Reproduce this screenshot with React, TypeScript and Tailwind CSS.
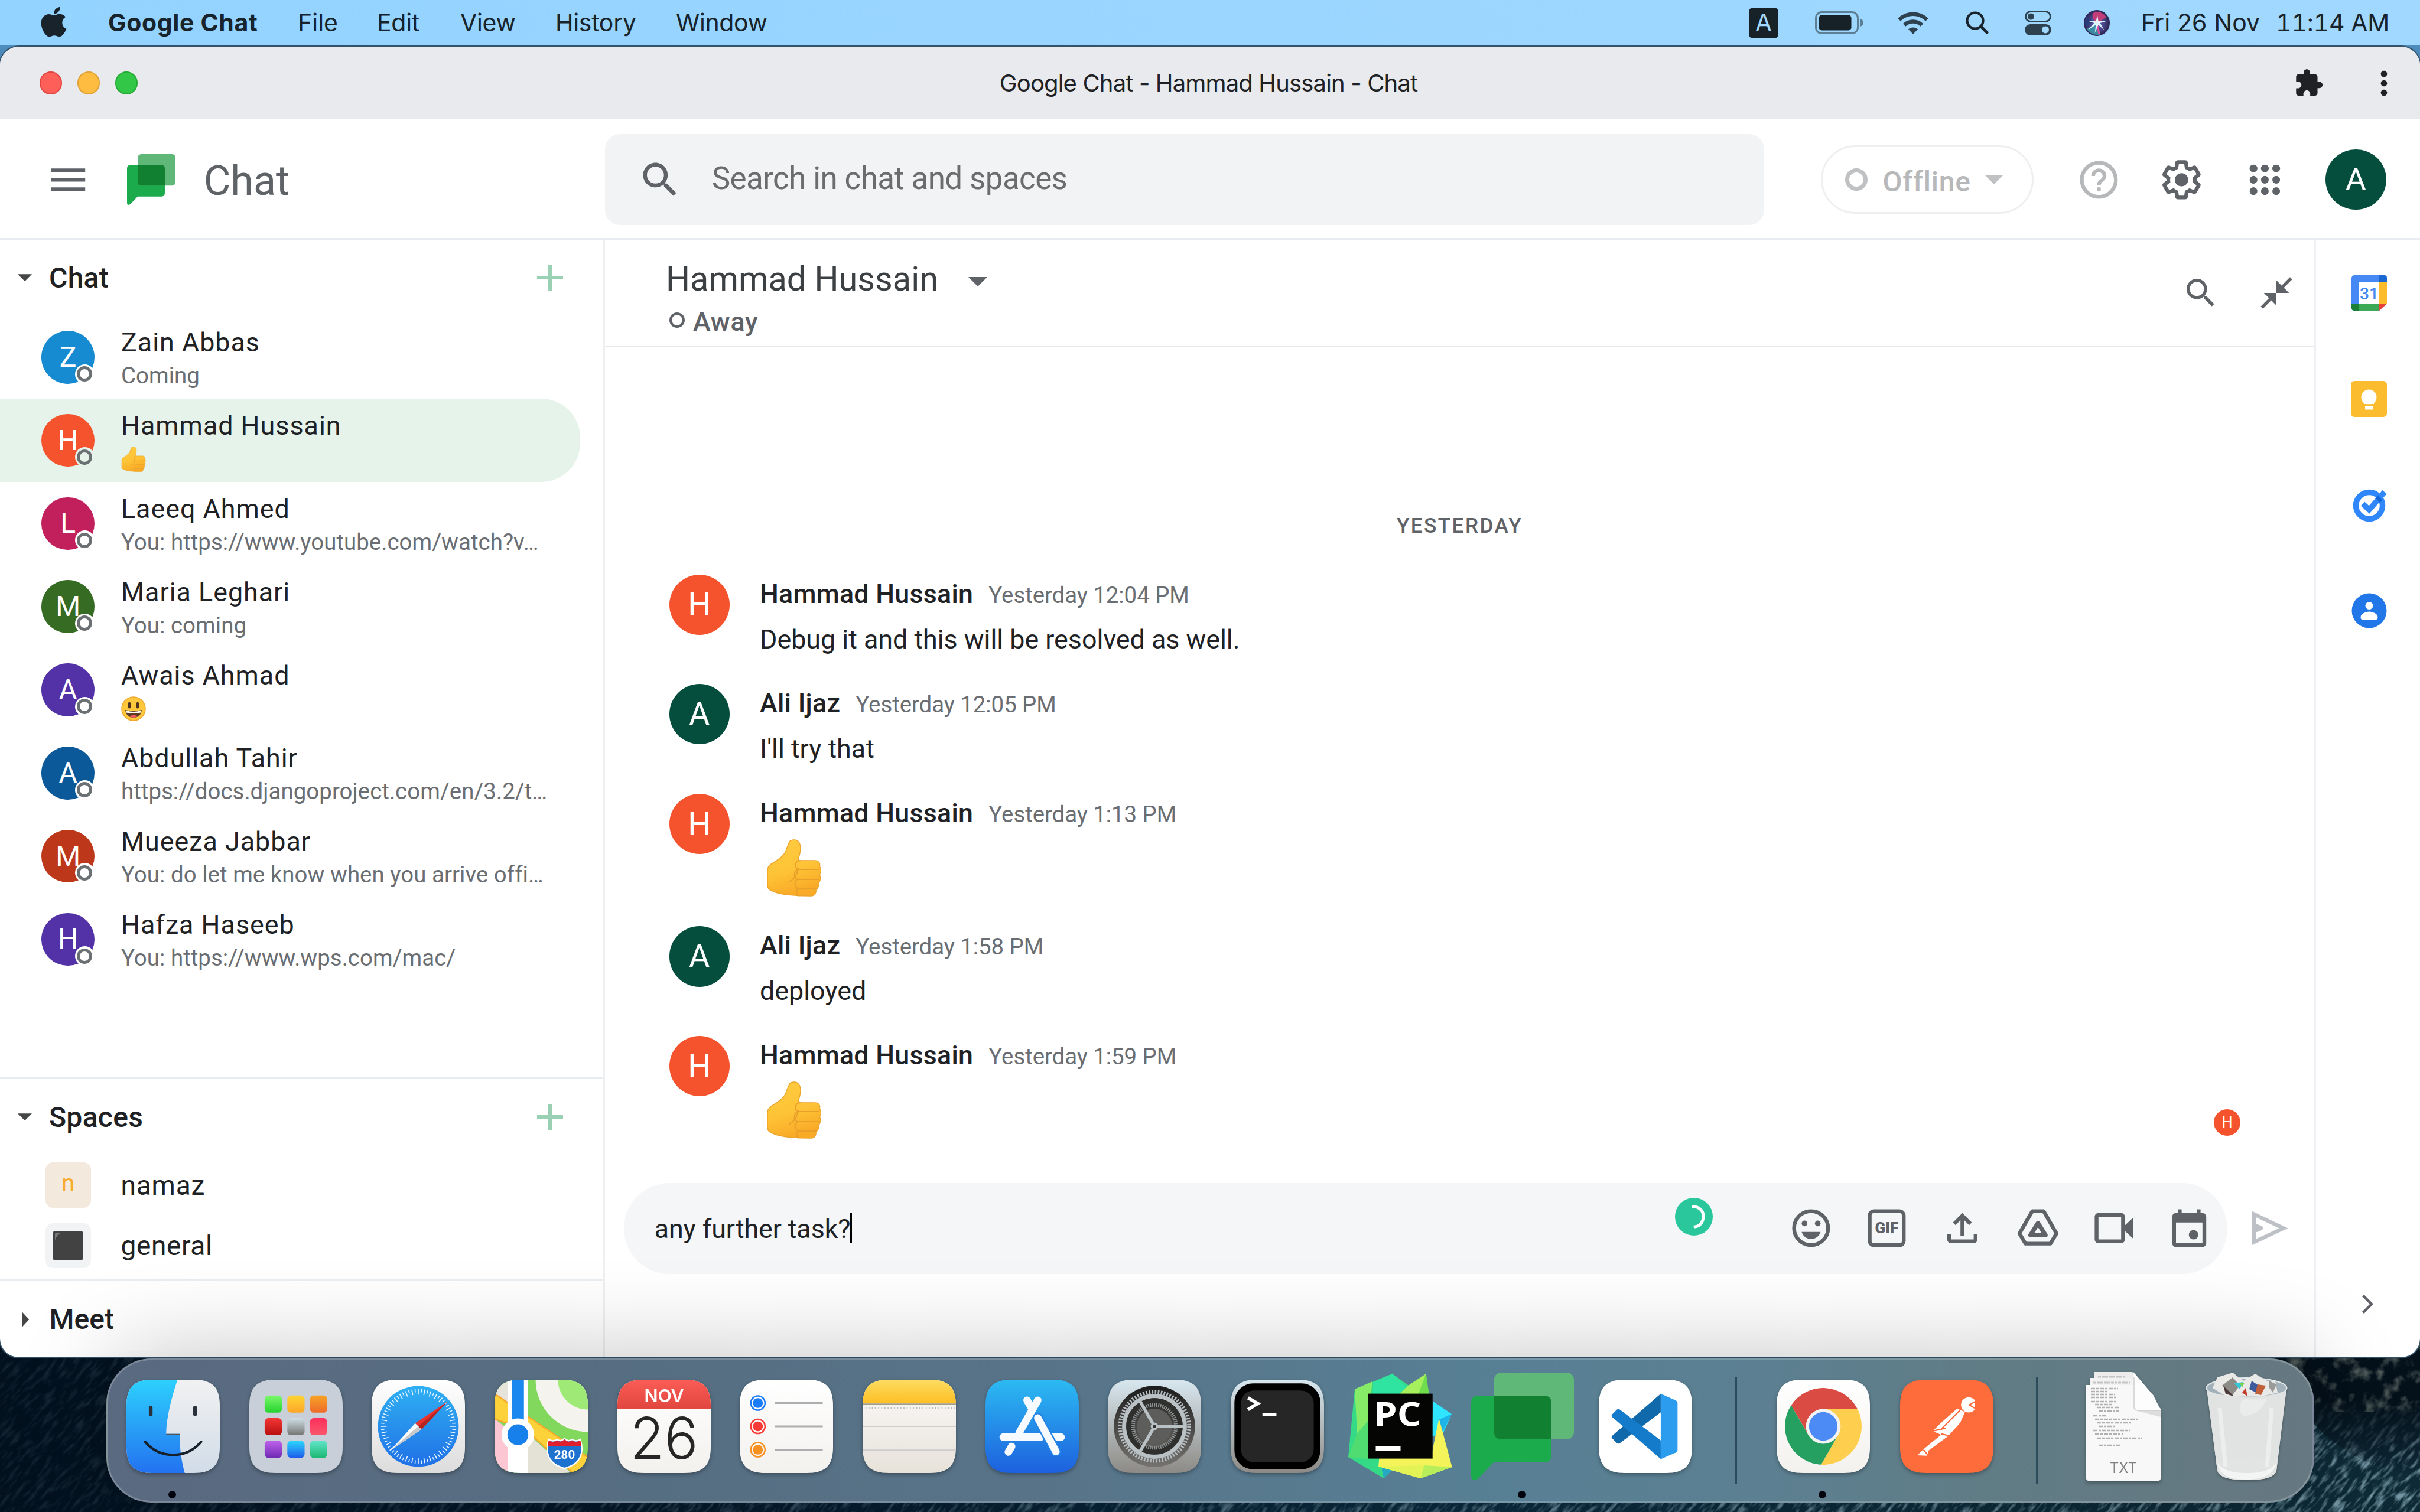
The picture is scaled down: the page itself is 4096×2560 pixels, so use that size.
import React from "react";
import { FaApple } from "react-icons/fa";

/* ---------- shared icon helpers ---------- */

type GlyphProps = { d: string; className?: string; rule?: "evenodd" | "nonzero" };

const Glyph = ({ d, className = "size-[76.8px] text-[#5f6368]", rule = "nonzero" }: GlyphProps) => (
  <svg viewBox="0 0 24 24" className={`shrink-0 fill-current ${className}`}>
    <path d={d} fillRule={rule} />
  </svg>
);

const SEARCH =
  "M15.5 14h-.79l-.28-.27C15.41 12.59 16 11.11 16 9.5 16 5.91 13.09 3 9.5 3S3 5.91 3 9.5 5.91 16 9.5 16c1.61 0 3.09-.59 4.23-1.57l.27.28v.79l5 4.99L20.49 19l-4.99-5zm-6 0C7.01 14 5 11.99 5 9.5S7.01 5 9.5 5 14 7.01 14 9.5 11.99 14 9.5 14z";
const MENU = "M3 18h18v-2H3v2zm0-5h18v-2H3v2zm0-7v2h18V6H3z";
const EXTENSION =
  "M20.5 11H19V7c0-1.1-.9-2-2-2h-4V3.5C13 2.12 11.88 1 10.5 1S8 2.12 8 3.5V5H4c-1.1 0-1.99.9-1.99 2v3.8H3.5c1.49 0 2.7 1.21 2.7 2.7s-1.21 2.7-2.7 2.7H2V20c0 1.1.9 2 2 2h3.8v-1.5c0-1.49 1.21-2.7 2.7-2.7 1.49 0 2.7 1.21 2.7 2.7V22H17c1.1 0 2-.9 2-2v-4h1.5c1.38 0 2.5-1.12 2.5-2.5S21.88 11 20.5 11z";
const MORE =
  "M12 8c1.1 0 2-.9 2-2s-.9-2-2-2-2 .9-2 2 .9 2 2 2zm0 2c-1.1 0-2 .9-2 2s.9 2 2 2 2-.9 2-2-.9-2-2-2zm0 6c-1.1 0-2 .9-2 2s.9 2 2 2 2-.9 2-2-.9-2-2-2z";
const HELP =
  "M11 18h2v-2h-2v2zm1-16C6.48 2 2 6.48 2 12s4.48 10 10 10 10-4.48 10-10S17.52 2 12 2zm0 18c-4.41 0-8-3.59-8-8s3.59-8 8-8 8 3.59 8 8-3.59 8-8 8zm0-14c-2.21 0-4 1.79-4 4h2c0-1.1.9-2 2-2s2 .9 2 2c0 2-3 1.75-3 5h2c0-2.25 3-2.5 3-5 0-2.21-1.79-4-4-4z";
const GEAR =
  "M19.43 12.98c.04-.32.07-.64.07-.98 0-.34-.03-.66-.07-.98l2.11-1.65c.19-.15.24-.42.12-.64l-2-3.46c-.09-.16-.26-.25-.44-.25-.06 0-.12.01-.17.03l-2.49 1c-.52-.4-1.08-.73-1.69-.98l-.38-2.65C14.46 2.18 14.25 2 14 2h-4c-.25 0-.46.18-.49.42l-.38 2.65c-.61.25-1.17.59-1.69.98l-2.49-1c-.06-.02-.12-.03-.18-.03-.17 0-.34.09-.43.25l-2 3.46c-.13.22-.07.49.12.64l2.11 1.65c-.04.32-.07.65-.07.98 0 .33.03.66.07.98l-2.11 1.65c-.19.15-.24.42-.12.64l2 3.46c.09.16.26.25.44.25.06 0 .12-.01.17-.03l2.49-1c.52.4 1.08.73 1.69.98l.38 2.65c.03.24.24.42.49.42h4c.25 0 .46-.18.49-.42l.38-2.65c.61-.25 1.17-.59 1.69-.98l2.49 1c.06.02.12.03.18.03.17 0 .34-.09.43-.25l2-3.46c.12-.22.07-.49-.12-.64l-2.11-1.65z";
const COLLAPSE =
  "M22 3.41L16.71 8.7 20 12h-8V4l3.29 3.29L20.59 2 22 3.41zM3.41 22l5.29-5.29L12 20v-8H4l3.29 3.29L2 20.59 3.41 22z";
const UPLOAD =
  "M4 15h2v3h12v-3h2v3c0 1.1-.9 2-2 2H6c-1.1 0-2-.9-2-2v-3zM13 16V7.83l2.59 2.58L17 9l-5-5-5 5 1.41 1.41L11 7.83V16h2z";
const VIDEO =
  "M18 10.48V6c0-1.1-.9-2-2-2H4c-1.1 0-2 .9-2 2v12c0 1.1.9 2 2 2h12c1.1 0 2-.9 2-2v-4.48l4.3 3.98v-11L18 10.48zM16 18H4V6h12v12z";
const EVENT =
  "M19 4h-1V2h-2v2H8V2H6v2H5c-1.11 0-1.99.9-1.99 2L3 20c0 1.1.89 2 2 2h14c1.1 0 2-.9 2-2V6c0-1.1-.9-2-2-2zm0 16H5V9h14v11zM14.3 13a2.5 2.5 0 1 0 .01 0z";
const SEND = "M3 3l19 9-19 9V3zM5 6.2v3.6c1.2.3 3.9 1.1 3.9 2.2S6.2 13.9 5 14.2v3.6L17.3 12 5 6.2z";

/* ---------- menu bar ---------- */

const Menu = ({ children, className }: { children: React.ReactNode; className: string }) => (
  <span className={`shrink-0 whitespace-pre ${className}`}>{children}</span>
);

const MenuBar = () => (
  <div className="flex h-[77px] shrink-0 items-center bg-linear-to-r from-[#93d3ff] to-[#a1d8ff] font-['Inter',sans-serif] text-[41px] text-[#18232b]">
    <div className="flex w-[183px] shrink-0 pl-[69px]">
      <FaApple className="mb-[4px] h-[58px] w-[44px]" />
    </div>
    <Menu className="w-[321px] font-bold tracking-[0.6px]">Google Chat</Menu>
    <Menu className="w-[134px]">File</Menu>
    <Menu className="w-[141px] tracking-[-0.3px]">Edit</Menu>
    <Menu className="w-[161px] tracking-[-0.3px]">View</Menu>
    <Menu className="w-[204px] tracking-[-0.3px]">History</Menu>
    <Menu className="w-[160px] tracking-[-0.4px]">Window</Menu>
    <div className="ml-auto flex items-center pr-[60px]">
      <div className="flex h-[52px] w-[50px] items-center justify-center rounded-[7px] bg-[#162128] text-[41px] text-[#a0d8ff]">A</div>
      <svg viewBox="0 0 83 39" className="ml-[62px] h-[39px] w-[83px]">
        <rect x="1.5" y="1.5" width="71" height="36" rx="10" fill="none" stroke="#5d7f96" strokeWidth="3" />
        <rect x="6.5" y="6.5" width="55" height="26" rx="5" fill="#162128" />
        <path d="M77 13q5 2 5 6.5t-5 6.5z" fill="#5d7f96" />
      </svg>
      <svg viewBox="0 0 52 38" className="ml-[57px] h-[38px] w-[52px]" fill="none" stroke="#2d414f" strokeWidth="6.5">
        <path d="M2.5 13.5C15.5 0.5 36.5 0.5 49.5 13.5" />
        <path d="M11 22.5C19.500 14.5 32.500 14.5 41 22.5" />
        <path d="M26 38l-8-8.5c4.500-4 11.500-4 16 0z" fill="#2d414f" stroke="none" />
      </svg>
      <svg viewBox="0 0 39 39" className="ml-[63px] size-[39px]" fill="none" stroke="#18232b" strokeWidth="4.2" strokeLinecap="round">
        <circle cx="16" cy="16" r="13.5" />
        <path d="M26 26l10 10" strokeWidth="5" />
      </svg>
      <svg viewBox="0 0 45 42" className="ml-[61px] h-[42px] w-[45px]">
        <rect x="1.5" y="1.5" width="42" height="17" rx="8.5" fill="none" stroke="#2d414f" strokeWidth="3" />
        <circle cx="10.5" cy="10" r="5.5" fill="#2d414f" />
        <rect x="0" y="23" width="45" height="19" rx="9.5" fill="#2d414f" />
        <circle cx="35" cy="32.5" r="6" fill="#a0d8ff" />
      </svg>
      <svg viewBox="0 0 44 44" className="ml-[55px] size-[44px]">
        <defs>
          <radialGradient id="siri">
            <stop offset="0" stopColor="#6b6fd0" />
            <stop offset="1" stopColor="#2b2350" />
          </radialGradient>
        </defs>
        <circle cx="22" cy="22" r="22" fill="url(#siri)" />
        <path d="M22 22C14 14 12 9 18 3a20 20 0 0 1 20 9z" fill="#c23c78" />
        <path d="M22 22C14 20 8 22 4 30a20 20 0 0 1 0-18z" fill="#2a3d7a" />
        <path d="M22 22C26 30 28 36 27 42 15 43 8 38 5 32z" fill="#3c9fb0" opacity=".8" />
        <path d="M22 22l4 19" stroke="#e04a98" strokeWidth="3" />
        <path d="M23 9l1.500 9 13 1-10 3 7 12-10-9-6 14 2-14-14 9 11-12-9-3 12 0z" fill="#e9fbff" opacity=".95" />
      </svg>
      <span className="ml-[53px] w-[228px] tracking-[0.1px] whitespace-nowrap">Fri 26 Nov</span>
      <span className="w-[184px] tracking-[-0.2px] whitespace-nowrap tabular-nums">11:14 AM</span>
    </div>
  </div>
);

/* ---------- window title bar ---------- */

const TitleBar = () => (
  <div className="relative flex h-[123px] shrink-0 items-center justify-center bg-[#e8eaed]">
    <div className="absolute left-[67px] flex gap-[25.6px]">
      <i className="size-[38.4px] rounded-full border-2 border-[#e2443f] bg-[#fe5f58]" />
      <i className="size-[38.4px] rounded-full border-2 border-[#e0a135] bg-[#febc40]" />
      <i className="size-[38.4px] rounded-full border-2 border-[#25aa36] bg-[#33c748]" />
    </div>
    <span className="-ml-[5px] font-['Inter',sans-serif] text-[40px] tracking-[-0.85px] text-[#202124]">
      Google Chat - Hammad Hussain - Chat
    </span>
    <div className="absolute right-[29px] flex items-center">
      <Glyph d={EXTENSION} className="mr-[70px] size-[51.2px] text-[#202124]" />
      <Glyph d={MORE} className="size-[64px] text-[#202124]" />
    </div>
  </div>
);

/* ---------- app header ---------- */

const ChatLogo = ({ className }: { className: string }) => (
  <svg viewBox="0 0 173 181" className={`shrink-0 ${className}`}>
    <path d="M12 39h111q12 0 12 12v88q0 12-12 12H38L11 179Q0 185 0 172V51q0-12 12-12z" fill="#1bab4d" />
    <rect x="38.6" y="0" width="134.4" height="112" rx="12" fill="#60b878" />
    <path d="M38.600 39H123q12 0 12 12v61H51q-12.400 0-12.400-12z" fill="#118030" />
  </svg>
);

const Header = () => (
  <div className="flex h-[204px] shrink-0 items-center border-b-[3px] border-[#e9edf1] bg-white pt-[3px]">
    <div className="flex w-[1024px] shrink-0 items-center pl-[77px]">
      <Glyph d={MENU} />
      <ChatLogo className="ml-[61px] h-[86px] w-[82px]" />
      <span className="mt-[3px] ml-[48px] text-[70px] leading-[80px] text-[#5f6368]">Chat</span>
    </div>
    <div className="flex h-[153.6px] w-[1961.5px] shrink-0 items-center rounded-[25.6px] bg-[#f1f3f4] pl-[55px]">
      <Glyph d={SEARCH} />
      <span className="-mt-[2px] ml-[49px] text-[53px] tracking-[-0.65px] text-[#6a6c6e]">Search in chat and spaces</span>
    </div>
    <div className="ml-[96.5px] flex h-[115.2px] w-[360px] shrink-0 items-center rounded-full border-[3px] border-[#efefef] pl-[38px] text-[#b6b8ba]">
      <i className="size-[38.4px] rounded-full border-[7px] border-[#bfc1c3]" />
      <span className="mt-[8px] ml-[25px] text-[48px] font-medium tracking-[0.8px]">Offline</span>
      <svg viewBox="0 0 32 16" className="ml-[23px] h-[16px] w-[32px] fill-[#bfc1c3]">
        <path d="M0 0h32L16 16z" />
      </svg>
    </div>
    <Glyph d={HELP} className="ml-[71.6px] size-[76.8px] text-[#b6b8ba]" />
    <svg viewBox="0 0 24 24" className="ml-[63.7px] size-[76.8px] shrink-0">
      <g transform="translate(12 12) scale(.935) translate(-12 -12)">
        <path d={GEAR} fill="none" stroke="#5f6368" strokeWidth="2.1" />
      </g>
      <circle cx="12" cy="12" r="3.5" fill="#5f6368" />
    </svg>
    <svg viewBox="-12 -12 24 24" className="ml-[64.5px] size-[76.8px] shrink-0 fill-[#5f6368]">
      {[-6, 0, 6].map((y) => [-6, 0, 6].map((x) => <circle key={`${x}${y}`} cx={x} cy={y} r="2.05" />))}
    </svg>
    <div className="ml-[64px] flex size-[102.4px] shrink-0 items-center justify-center rounded-full bg-[#054d3d] text-[54px] text-white">A</div>
  </div>
);

/* ---------- emoji ---------- */

const Thumb = ({ className }: { className: string }) => (
  <svg viewBox="0 0 92 97" className={`shrink-0 ${className}`}>
    <defs>
      <linearGradient id="thumb" x1="0" y1="0" x2=".3" y2="1">
        <stop offset="0" stopColor="#ffcc40" />
        <stop offset=".6" stopColor="#fec337" />
        <stop offset="1" stopColor="#f9ab27" />
      </linearGradient>
    </defs>
    <path
      d="M45 1c8-1 12 6 12 14 0 8-3 14-4 21h28c7 0 10 5 8 10 4 4 3 11 0 14 3 4 2 11-2 14 2 4 0 9-4 11 1 7-3 11-8 11-22 0-50-2-60-6C4 86 1 84 1 77V53c0-5 2-8 6-11 11-7 20-12 24-20 3-7 4-11 6-15 1-4 3-6 8-6z"
      fill="url(#thumb)"
      stroke="#eda42c"
      strokeWidth="1.5"
    />
    <path d="M57 36c-9 0-12 11-4 15-9 3-8 15-1 17-7 4-5 13 1 16-4 3-4 9 1 12" fill="none" stroke="#e8a02a" strokeWidth="2" />
    <path d="M53 51h36M52 68h36M53 84h31" stroke="#e8a02a" strokeWidth="2" />
    <path d="M53 50c-2 10-7 18-15 22" fill="none" stroke="#e8a02a" strokeWidth="2" strokeLinecap="round" />
  </svg>
);

const Grin = () => (
  <svg viewBox="0 0 42 42" className="size-[42px]">
    <circle cx="21" cy="21" r="20" fill="#fdc83c" stroke="#f0a52e" strokeWidth="1.5" />
    <ellipse cx="14" cy="15" rx="2.8" ry="5.5" fill="#4e3420" />
    <ellipse cx="28" cy="15" rx="2.8" ry="5.5" fill="#4e3420" />
    <path d="M7 23q14 4 28 0-2 13-14 13T7 23z" fill="#5e3b26" />
    <path d="M8 24q13 4 26 0l-1 3.500q-12 3-24 0z" fill="#fff" />
    <path d="M14 34q7-5 14 0-7 4-14 0z" fill="#ef5a5a" />
  </svg>
);

/* ---------- sidebar ---------- */

const SectionHead = ({ title }: { title: string }) => (
  <div className="flex h-[128.4px] shrink-0 items-center pr-[68px] pl-[29px]">
    <svg viewBox="0 0 24 12" className="ml-[1px] h-[12.5px] w-[24px] fill-[#444746]">
      <path d="M0 0h24L12 12z" />
    </svg>
    <span className="mt-[2px] ml-[29px] text-[48px] font-medium tracking-[0.3px] text-[#202124]">{title}</span>
    <svg viewBox="0 0 44 44" className="ml-auto size-[44px] stroke-[#9ad0b4]" strokeWidth="6.2">
      <path d="M22 0v44M0 22h44" />
    </svg>
  </div>
);

type Person = { name: string; letter: string; color: string; sub: React.ReactNode; active?: boolean };

const people: Person[] = [
  { name: "Zain Abbas", letter: "Z", color: "bg-[#168bd2]", sub: "Coming" },
  { name: "Hammad Hussain", letter: "H", color: "bg-[#f4532d]", sub: <Thumb className="mt-[7px] h-[43px] w-[42px]" />, active: true },
  { name: "Laeeq Ahmed", letter: "L", color: "bg-[#c21f5d]", sub: "You: https://www.youtube.com/watch?v…" },
  { name: "Maria Leghari", letter: "M", color: "bg-[#366b24]", sub: "You: coming" },
  { name: "Awais Ahmad", letter: "A", color: "bg-[#5232a6]", sub: <span className="block pt-[7px]"><Grin /></span> },
  { name: "Abdullah Tahir", letter: "A", color: "bg-[#0b5999]", sub: "https://docs.djangoproject.com/en/3.2/t…" },
  { name: "Mueeza Jabbar", letter: "M", color: "bg-[#bd371b]", sub: "You: do let me know when you arrive offi…" },
  { name: "Hafza Haseeb", letter: "H", color: "bg-[#5232a6]", sub: "You: https://www.wps.com/mac/" },
];

const PersonRow = ({ p }: { p: Person }) => (
  <div className={`flex h-[140.8px] w-[982px] shrink-0 items-center rounded-r-[66px] pl-[70.4px] ${p.active ? "bg-[#e6f3ea]" : ""}`}>
    <div className={`relative flex size-[89.6px] shrink-0 items-center justify-center rounded-full text-[48px] text-white ${p.color}`}>
      {p.letter}
      <span className={`absolute right-0 bottom-0 flex size-[33px] items-center justify-center rounded-full ${p.active ? "bg-[#e6f3ea]" : "bg-white"}`}>
        <i className="size-[26px] rounded-full border-[5px] border-[#6b7073]" />
      </span>
    </div>
    <div className="ml-[45px] flex h-full flex-col pt-[18px] whitespace-nowrap">
      <span className="h-[56px] text-[44.8px] leading-[56px] tracking-[1px] text-[#202124]">{p.name}</span>
      <span className="h-[56px] text-[38.4px] leading-[56px] tracking-[0.05px] text-[#6a6e73]">{p.sub}</span>
    </div>
  </div>
);

const Sidebar = () => (
  <div className="flex w-[1024px] shrink-0 flex-col border-r-[3px] border-[#eef0f2]">
    <div className="flex flex-1 flex-col">
      <SectionHead title="Chat" />
      {people.map((p) => (
        <PersonRow key={p.name} p={p} />
      ))}
    </div>
    <div className="h-[342px] shrink-0 border-t-[3px] border-[#e9ecef]">
      <SectionHead title="Spaces" />
      <div className="flex h-[102.4px] items-center pl-[76.8px]">
        <div className="flex size-[76.8px] items-center justify-center rounded-[12.8px] bg-[#f3e9dc] pb-[5px] text-[41px] text-[#f9ab2d]">n</div>
        <span className="mt-[1px] ml-[51px] text-[46px] tracking-[0.8px] text-[#202124]">namaz</span>
      </div>
      <div className="flex h-[102.4px] items-center pl-[76.8px]">
        <div className="flex size-[76.8px] items-center justify-center rounded-[12.8px] bg-[#f1f3f4]">
          <svg viewBox="0 0 50 50" className="size-[50px]">
            <rect width="50" height="50" rx="3" fill="#424242" />
            <path d="M3 16V6q0-3 3-3h10Q6 5 3 16z" fill="#777" />
          </svg>
        </div>
        <span className="mt-[1px] ml-[51px] text-[46px] tracking-[0.6px] text-[#202124]">general</span>
      </div>
    </div>
    <div className="flex h-[132px] shrink-0 items-center border-t-[3px] border-[#e8eef2] pl-[37px]">
      <svg viewBox="0 0 12 26" className="h-[26px] w-[12.5px] fill-[#444746]">
        <path d="M0 0v26l12-13z" />
      </svg>
      <span className="mt-[1px] ml-[34px] text-[48px] font-medium text-[#202124]">Meet</span>
    </div>
  </div>
);

/* ---------- conversation ---------- */

type Msg = { who: "H" | "A"; time: string; text?: string };

const messages: Msg[] = [
  { who: "H", time: "Yesterday 12:04 PM", text: "Debug it and this will be resolved as well." },
  { who: "A", time: "Yesterday 12:05 PM", text: "I'll try that" },
  { who: "H", time: "Yesterday 1:13 PM" },
  { who: "A", time: "Yesterday 1:58 PM", text: "deployed" },
  { who: "H", time: "Yesterday 1:59 PM" },
];

const MessageRow = ({ m }: { m: Msg }) => (
  <div className={`flex shrink-0 pl-[108.6px] ${m.text ? "h-[185.6px]" : "h-[224.6px]"}`}>
    <div className={`flex size-[102.4px] shrink-0 items-center justify-center rounded-full text-[55px] text-white ${m.who === "H" ? "bg-[#f4532d]" : "bg-[#054d3d]"}`}>
      {m.who}
    </div>
    <div className="ml-[51px] flex flex-col pt-[5px]">
      <div className="flex h-[56px] items-baseline leading-[56px]">
        <span className="text-[44.8px] font-medium tracking-[0.25px] text-[#202124]">{m.who === "H" ? "Hammad Hussain" : "Ali Ijaz"}</span>
        <span className="ml-[26px] text-[38.4px] tracking-[-0.05px] text-[#6a6e73]">{m.time}</span>
      </div>
      {m.text ? (
        <span className="mt-[21px] h-[56px] text-[44.8px] leading-[56px] text-[#202124]">{m.text}</span>
      ) : (
        <Thumb className="mt-[16px] ml-[12px] h-[97px] w-[92px]" />
      )}
    </div>
  </div>
);

const EmojiIcon = () => (
  <svg viewBox="0 0 24 24" className="size-[76.8px] fill-[#5f6368]">
    <circle cx="12" cy="12" r="9" fill="none" stroke="#5f6368" strokeWidth="2" />
    <circle cx="8.5" cy="9.5" r="1.5" />
    <circle cx="15.5" cy="9.5" r="1.5" />
    <path d="M7 14h10c-.8 2.4-2.7 3.8-5 3.8S7.8 16.4 7 14z" />
  </svg>
);

const GifIcon = () => (
  <svg viewBox="0 0 24 24" className="size-[76.8px]">
    <rect x="3" y="3" width="18" height="18" rx="2.2" fill="none" stroke="#5f6368" strokeWidth="2" />
    <text x="12" y="14.8" textAnchor="middle" fontSize="7.8" fontWeight="900" fill="#5f6368" textLength="12.4" lengthAdjust="spacingAndGlyphs" fontFamily="Roboto, sans-serif">
      GIF
    </text>
  </svg>
);

const DriveIcon = () => (
  <svg viewBox="0 0 24 24" className="size-[76.8px]" fill="none" stroke="#5f6368" strokeLinejoin="round">
    <path d="M9 3h6l6.800 11.8L18.600 20.2H5.400L2.200 14.8z" strokeWidth="2" />
    <path d="M12 9.3l-4 6.4h8z" strokeWidth="2.3" />
  </svg>
);

const Composer = () => (
  <div className="flex h-[295px] shrink-0 items-start pl-[31.7px]">
    <div className="relative flex h-[153.6px] w-[2714px] shrink-0 items-center rounded-full bg-[#f5f6f8] pr-[26px] pl-[52px]">
      <span className="mt-[1px] text-[44.8px] tracking-[-0.1px] text-[#202124]">any further task?</span>
      <i className="h-[51px] w-[3px] bg-black" />
      <svg viewBox="0 0 64 64" className="absolute top-[25px] left-[1779px] size-[64px]">
        <circle cx="32" cy="32" r="32" fill="#2ac69c" />
        <path d="M31 15c10 0 17 7 17 16 0 10-6 17-14 18" fill="none" stroke="#fff" strokeWidth="5" strokeLinecap="round" />
      </svg>
      <div className="ml-auto flex gap-[51.2px]">
        <EmojiIcon />
        <GifIcon />
        <Glyph d={UPLOAD} />
        <DriveIcon />
        <Glyph d={VIDEO} />
        <Glyph d={EVENT} />
      </div>
    </div>
    <Glyph d={SEND} rule="evenodd" className="mt-[38.4px] ml-[32px] size-[76.8px] text-[#bdc1c6]" />
  </div>
);

const Conversation = () => (
  <div className="flex min-w-0 flex-1 flex-col">
    <div className="flex h-[182px] shrink-0 items-center border-b-[3px] border-[#e6e8eb] pr-[32px] pl-[103px]">
      <div className="flex flex-col pt-[22px]">
        <div className="flex h-[66px] items-center">
          <span className="text-[57.6px] leading-[66px] text-[#3c4043]">Hammad Hussain</span>
          <svg viewBox="0 0 32 16" className="mt-[8px] ml-[51px] h-[16px] w-[32px] fill-[#5f6368]">
            <path d="M0 0h32L16 16z" />
          </svg>
        </div>
        <div className="mt-[11px] flex h-[56px] items-center pl-[6px]">
          <i className="-mt-[6px] size-[26px] rounded-full border-[4.5px] border-[#5f6368]" />
          <span className="ml-[14px] text-[44.8px] leading-[56px] font-medium tracking-[0.6px] text-[#5f6368]">Away</span>
        </div>
      </div>
      <div className="ml-auto flex gap-[64px]">
        <Glyph d={SEARCH} className="size-[64px] text-[#5f6368]" />
        <Glyph d={COLLAPSE} className="size-[64px] text-[#5f6368]" />
      </div>
    </div>
    <div className="relative flex flex-1 flex-col pt-[274px]">
      <div className="mb-[54.5px] h-[56px] text-center text-[35.2px] leading-[56px] font-medium tracking-[2.4px] text-[#5f6368]">YESTERDAY</div>
      {messages.map((m) => (
        <MessageRow key={m.time} m={m} />
      ))}
      <div className="absolute top-[1290px] right-[125px] flex size-[44.8px] items-center justify-center rounded-full bg-[#f4532d] text-[25px] text-white">H</div>
    </div>
    <Composer />
  </div>
);

/* ---------- side panel ---------- */

const SidePanel = () => (
  <div className="flex w-[179px] shrink-0 flex-col items-center border-l-[3px] border-[#eef0f3] pt-[60px] pl-[3px]">
    <svg viewBox="0 0 60 60" className="mb-[119.2px] size-[60px]">
      <rect width="60" height="60" rx="5" fill="#4688f4" />
      <path d="M47 0h8q5 0 5 5v7H47z" fill="#1b67d2" />
      <path d="M47 12h13v36H47z" fill="#fcbc2c" />
      <path d="M12 48h35v12H12z" fill="#3ba955" />
      <path d="M0 48h12v12H5q-5 0-5-5z" fill="#1a8038" />
      <path d="M47 60h13V48z" fill="#fff" />
      <path d="M47 48h13L47 60z" fill="#ea4335" />
      <path d="M12 12h35v36H12z" fill="#fff" />
      <text x="30" y="40.5" textAnchor="middle" fontSize="28" fontWeight="500" fill="#4688f4" fontFamily="Roboto, sans-serif">31</text>
    </svg>
    <svg viewBox="0 0 61 61" className="mb-[118.2px] size-[61px]">
      <rect width="61" height="61" rx="6" fill="#fcbc2f" />
      <circle cx="30.5" cy="27.5" r="13" fill="#fff" />
      <path d="M22 30h17v9H22z" fill="#fff" />
      <path d="M22 39.200h17v3.300H22z" fill="#fcbc2f" />
      <path d="M24 42.500h13.500v6H24z" fill="#fff" />
    </svg>
    <svg viewBox="0 0 60 60" className="mb-[119.2px] size-[60px]">
      <circle cx="30" cy="32" r="22.5" fill="none" stroke="#2f87fb" strokeWidth="9.5" />
      <path d="M19 29l11 10L56 9" fill="none" stroke="#2f87fb" strokeWidth="9.5" />
      <path d="M41 19.500l7 8 4-4.500-7-9z" fill="#1267d6" />
    </svg>
    <svg viewBox="0 0 60 60" className="size-[60px]">
      <circle cx="30" cy="30" r="29.5" fill="#2277e8" />
      <circle cx="30" cy="21.5" r="6.5" fill="#fff" />
      <path d="M15.500 41c0-6 9-9.500 14.500-9.500S44.500 35 44.500 41q0 4-3 4h-23q-3 0-3-4z" fill="#fff" />
    </svg>
    <svg viewBox="0 0 20 32" className="mt-auto mr-[6px] mb-[74px] h-[32px] w-[20px]" fill="none" stroke="#5f6368" strokeWidth="4.5">
      <path d="M2.500 1.500L17 16 2.500 30.500" />
    </svg>
  </div>
);

/* ---------- dock ---------- */

const Tile = ({ children }: { children: React.ReactNode }) => (
  <svg viewBox="0 0 100 100" className="size-[158px] drop-shadow-[0_3px_3px_rgba(0,0,0,0.3)]">
    <g clipPath="url(#tile)">{children}</g>
  </svg>
);

const gradients = [
  ["finderL", "#2dd0fd", "#2372f0"],
  ["finderR", "#f1f1f2", "#d1dce8"],
  ["white", "#ffffff", "#dcdcdc"],
  ["paper", "#ffffff", "#f3f1ee"],
  ["safari", "#2fb0f3", "#2070e6"],
  ["red", "#fb5c56", "#e0463f"],
  ["yellow", "#fddc62", "#fdbf24"],
  ["notes", "#fbfafa", "#e7e2d9"],
  ["store", "#2cbaf2", "#1d60de"],
  ["steel", "#d8e7ef", "#8d8a86"],
  ["disk", "#1c1c1c", "#75736f"],
  ["basket", "#dadcdd", "#f3f3f3"],
  ["lp0", "#7bf76b", "#24d32f"],
  ["lp1", "#fed433", "#fda62a"],
  ["lp2", "#f7a325", "#ee6b2b"],
  ["lp3", "#f43635", "#b80f10"],
  ["lp4", "#cfdfe5", "#757574"],
  ["lp5", "#fb305c", "#fa566c"],
  ["lp6", "#c062ec", "#6f2ab4"],
  ["lp7", "#2bd9fd", "#1f5cec"],
  ["lp8", "#62e5cb", "#1cb873"],
];

const Gradients = () => (
  <svg className="absolute size-0">
    <defs>
      <clipPath id="tile">
        <path d="M0 28C0 8 8 0 28 0H72C92 0 100 8 100 28V72C100 92 92 100 72 100H28C8 100 0 92 0 72Z" />
      </clipPath>
      {gradients.map(([id, a, b]) => (
        <linearGradient key={id} id={id} x1="0" y1="0" x2="0" y2="1">
          <stop offset="0" stopColor={a} />
          <stop offset="1" stopColor={b} />
        </linearGradient>
      ))}
    </defs>
  </svg>
);

const Finder = () => (
  <Tile>
    <rect width="100" height="100" fill="url(#finderR)" />
    <path d="M0 0h54.700C48 20 43 40 42.500 58H57c-.3 14 2 30 5.500 42H0z" fill="url(#finderL)" />
    <path d="M42.500 58.500H57" stroke="#555" strokeWidth=".8" />
    <path d="M26 30v7M73.500 30v7" stroke="#2b3138" strokeWidth="4" strokeLinecap="round" />
    <path d="M20 66.500c8 9.500 19 14 30 14s22-4.500 30-14" fill="none" stroke="#15202b" strokeWidth="2.6" strokeLinecap="round" />
  </Tile>
);

const Launchpad = () => (
  <Tile>
    <rect width="100" height="100" fill="#c8cfd8" />
    {["url(#lp0)", "url(#lp1)", "url(#lp2)", "url(#lp3)", "url(#lp4)", "url(#lp5)", "url(#lp6)", "url(#lp7)", "url(#lp8)"].map((c, i) => (
      <rect key={c} x={16.4 + (i % 3) * 24.3} y={17 + Math.floor(i / 3) * 24.2} width="18.5" height="18.3" rx="4" fill={c} />
    ))}
  </Tile>
);

const Safari = () => (
  <Tile>
    <rect width="100" height="100" fill="url(#white)" />
    <circle cx="50" cy="50" r="43.3" fill="url(#safari)" />
    {Array.from({ length: 72 }, (_, i) => (
      <path key={i} d={i % 2 ? "M50 10v3.5" : "M50 10v6"} stroke="#e8f6ff" strokeWidth="1" transform={`rotate(${i * 5} 50 50)`} />
    ))}
    <path d="M81 23.500L46.600 46.600l6.800 6.800z" fill="#e9332f" />
    <path d="M81 23.500L53.400 53.400 50 50z" fill="#b62420" />
    <path d="M19.500 76.500l27.100-29.900 6.800 6.800z" fill="#fafafa" />
    <path d="M19.500 76.500L50 50l3.400 3.400z" fill="#c9c9c9" />
  </Tile>
);

const Maps = () => (
  <Tile>
    <rect width="100" height="100" fill="#82d85d" />
    <circle cx="100" cy="0" r="56" fill="#f5f3ee" />
    <circle cx="100" cy="0" r="32" fill="#9fea77" />
    <path d="M0 0h16v30L0 14z" fill="#e6e3da" />
    <path d="M0 42l16 12v46H0z" fill="#fdc6d3" />
    <path d="M34 56l48 44H34z" fill="#e4e1d6" />
    <path d="M0 15l100 68v17H84L34 54 0 42z" fill="#fdd13a" stroke="#f8a72c" strokeWidth="1.5" />
    <rect x="14" y="0" width="22" height="100" fill="#fff" />
    <rect x="18.5" y="0" width="13" height="46" fill="#1a88ee" />
    <circle cx="25" cy="59" r="17.5" fill="#fff" />
    <circle cx="25" cy="59" r="11.2" fill="#1880ea" />
    <path d="M58 64q5 3 9 0 4 3 8-1 4 4 8 1 4 3 9 0c4 14 1 26-17 31-18-5-21-17-17-31z" fill="#1d72cf" stroke="#fff" strokeWidth="1.5" />
    <path d="M58 65q5 3 9 0 4 3 8-1 4 4 8 1 4 3 9 0l1 6H57z" fill="#e0202d" />
    <text x="75" y="85" textAnchor="middle" fontSize="13" fontWeight="700" fill="#fff" fontFamily="Roboto, sans-serif">280</text>
  </Tile>
);

const CalendarTile = () => (
  <Tile>
    <rect width="100" height="100" fill="url(#paper)" />
    <rect width="100" height="31" fill="url(#red)" />
    <text x="50" y="24" textAnchor="middle" fontSize="19.2" fontWeight="600" fill="#fff" fontFamily="Inter, sans-serif">NOV</text>
    <text x="50" y="84.5" textAnchor="middle" fontSize="62" fontWeight="300" fill="#262626" textLength="73" lengthAdjust="spacingAndGlyphs" fontFamily="Inter, sans-serif">26</text>
  </Tile>
);

const Reminders = () => (
  <Tile>
    <rect width="100" height="100" fill="url(#paper)" />
    {[["#1a7cf8", 25], ["#f83b36", 50], ["#f79122", 75]].map(([c, y]) => (
      <g key={y}>
        <circle cx="19.5" cy={y} r="7.6" fill="none" stroke={c as string} strokeWidth="1.6" />
        <circle cx="19.5" cy={y} r="5.3" fill={c as string} />
        <path d={`M37.5 ${y}H89`} stroke="#aeaeb0" strokeWidth="2" />
      </g>
    ))}
  </Tile>
);

const NotesTile = () => (
  <Tile>
    <rect width="100" height="100" fill="url(#notes)" />
    <rect width="100" height="25.5" fill="url(#yellow)" />
    <path d="M0 26.200h100" stroke="#a59c88" strokeWidth="1.5" />
    <path d="M3 30.500h96" stroke="#b9b7b6" strokeWidth="2.2" strokeDasharray="1 2.4" />
    <path d="M0 50h100M0 75.500h100" stroke="#cfccd0" strokeWidth="1.4" />
  </Tile>
);

const AppStore = () => (
  <Tile>
    <rect width="100" height="100" fill="url(#store)" />
    <g stroke="#f7fbff" strokeWidth="8" strokeLinecap="round">
      <path d="M44.500 22l4 7" />
      <path d="M56 22L36 57" />
      <path d="M19 61.500h40M72 61.500h9" />
      <path d="M28 71.500l-3.500 6" />
      <path d="M56 41l19.500 36" stroke="#2484e6" strokeWidth="11" />
      <path d="M56 41l19.500 36" />
    </g>
  </Tile>
);

const Settings = () => (
  <Tile>
    <rect width="100" height="100" fill="url(#steel)" />
    <circle cx="50" cy="50" r="43.5" fill="url(#disk)" />
    <circle cx="50" cy="50" r="37" fill="none" stroke="#b5bcc0" strokeWidth="4" strokeDasharray="1.7 1.53" />
    <circle cx="50" cy="50" r="32.5" fill="none" stroke="#b9c1c4" strokeWidth="4.5" />
    <circle cx="50" cy="50" r="26.500" fill="none" stroke="#2f2f2e" strokeWidth="7.5" />
    <circle cx="50" cy="50" r="23" fill="none" stroke="#8a8f90" strokeWidth="4" strokeDasharray="1.2 1" />
    <circle cx="50" cy="50" r="19" fill="#5d5d5b" />
    <g stroke="#b9c1c4" strokeWidth="3.4">
      <path d="M50 50h31M50 50L34.500 23M50 50L34.500 77" />
    </g>
    <circle cx="50" cy="50" r="4" fill="#b9c1c4" />
    <circle cx="50" cy="50" r="1.6" fill="#333" />
  </Tile>
);

const TerminalTile = () => (
  <Tile>
    <rect width="100" height="100" fill="url(#steel)" />
    <rect x="4" y="4" width="92" height="92" rx="20" fill="#000" />
    <rect x="11" y="11.5" width="78" height="77" rx="14" fill="#262626" />
    <path d="M18.500 19.500l10.500 6-10.500 6.500" fill="none" stroke="#fff" strokeWidth="3.6" />
    <path d="M34 37.500h15" stroke="#fff" strokeWidth="3.6" />
  </Tile>
);

const PyCharm = () => (
  <svg viewBox="0 0 176 177" className="h-[177px] w-[176px]">
    <path d="M74.700 0L11 26 0 141l60 36 16-16 60-30V34L102 19.500z" fill="#35da86" />
    <path d="M11 26l30-13-8 68-18 20z" fill="#86ec68" />
    <path d="M33 80L14 103 0 141l40 4z" fill="#50dc70" />
    <path d="M74.700 0l40 36H42V14z" fill="#2fe3a0" />
    <path d="M131.600 0L102 19.500 80 40h56z" fill="#a5f05c" />
    <path d="M131.600 0L118 36h19z" fill="#6fdd4c" />
    <path d="M144 47l31 21-15 34-20 4z" fill="#2fe5ff" />
    <path d="M175 68l-15 30-8-20z" fill="#1fb4e8" />
    <path d="M60 177l-6-30 26 10z" fill="#26a7c4" />
    <path d="M153.600 75.500L175.700 158l-53.300 19L51 157l2-20h88z" fill="#f4f45a" />
    <path d="M122.400 177l6-22 47 3z" fill="#b7ee5a" />
    <path d="M51 157l77-2-6 22z" fill="#e3f356" />
    <rect x="33.7" y="33.6" width="109" height="110" fill="#050503" />
    <text x="43" y="88" fontSize="56" fontWeight="700" fill="#fff" textLength="80" lengthAdjust="spacingAndGlyphs" fontFamily="Open Sans, sans-serif">PC</text>
    <rect x="46.5" y="122" width="42" height="8" fill="#fff" />
  </svg>
);

const VSCode = () => (
  <Tile>
    <rect width="100" height="100" fill="#fff" />
    <path d="M66.400 15v20L22.500 68q-1.500 1-3 0L14.500 63q-1.500-1.500 0-3z" fill="#0f69ab" />
    <path d="M66.400 85V65L22.500 32q-1.500-1-3 0L14.500 37q-1.500 1.500 0 3z" fill="#137bca" />
    <path d="M66.400 15l16 7.200q2 1 2 3v50q0 2-2 3l-16 7z" fill="#2c9cee" />
  </Tile>
);

const ChromeTile = () => (
  <Tile>
    <rect width="100" height="100" fill="url(#paper)" />
    <path d="M15.600 27.500A41.100 41.100 0 0 1 86.700 31.500H50L34 59.250z" fill="#da4c43" />
    <path d="M86.700 31.500A41.100 41.100 0 0 1 47.700 91L66 59.250 50 31.500z" fill="#fecf4e" />
    <path d="M47.700 91A41.100 41.100 0 0 1 15.600 27.500L34 59.250H66z" fill="#25a061" />
    <circle cx="50" cy="50" r="18.6" fill="#f3f3f3" />
    <circle cx="50" cy="50" r="15.3" fill="#4c8bf5" />
  </Tile>
);

const Postman = () => (
  <Tile>
    <rect width="100" height="100" fill="#ff6c3b" />
    <circle cx="73.5" cy="27" r="8.2" fill="#fff" />
    <path d="M61 31l8.500 3.500L64.500 46l-13 14.500-21 15.500-1.500 5.500-10.500-.5 6-6L44 59l-9-4 7-7z" fill="#fff" />
    <path d="M44 53l20-20M35 55l14-3M44 58l8 2M25 75l5 6M74 27l7 4v-8z" stroke="#ff6c3b" strokeWidth="1.4" fill="none" />
  </Tile>
);

const TxtFile = () => (
  <svg viewBox="0 0 126 184" className="h-[184px] w-[126px] drop-shadow-[0_4px_3px_rgba(0,0,0,0.3)]">
    <path d="M14 0h64l36 40v60H14z" fill="#ececec" />
    <path d="M7 10h75l36 42v50H7z" fill="#f2f2f2" />
    <path d="M0 22h80l46 40v118q0 4-4 4H4q-4 0-4-4z" fill="#f8f8f8" />
    <path d="M80 0l34 40 12 24H88q-5 0-5-5z" fill="#fdfdfd" />
    <path d="M81 8v51q0 6 7 6h38" fill="none" stroke="#cfcfcf" strokeWidth="1.5" />
    <path d="M83 65h43v11z" fill="#ccc" opacity=".6" />
    <path d="M20 8h46M12 18h62" stroke="#c4c4c4" strokeWidth="3" strokeDasharray="5 1" />
    <g stroke="#b0b0b0" strokeWidth="2.4">
      {[28, 33, 38, 43, 50, 55, 60, 66, 74, 80, 86, 92, 99, 105, 112, 124].map((y, i) => (
        <path key={y} d={`M${i < 5 ? 8 : 12 + (i % 4) * 3} ${y}h${[46, 30, 40, 44, 42, 28, 40, 34, 22, 74, 58, 30, 62, 48, 76, 36][i]}`} strokeDasharray="7 2 4 2" />
      ))}
    </g>
    <text x="63" y="171" textAnchor="middle" fontSize="26" fill="#808080" fontFamily="Inter, sans-serif" textLength="46" lengthAdjust="spacingAndGlyphs">TXT</text>
  </svg>
);

const Trash = () => (
  <svg viewBox="0 0 139 182" className="h-[182px] w-[139px] drop-shadow-[0_2px_2px_rgba(0,0,0,0.3)]">
    <path d="M2 26c4-14 132-14 135 0l-17 140q-4 16-50 16t-50-16z" fill="url(#basket)" />
    <ellipse cx="69.5" cy="26" rx="68" ry="17" fill="#a3b2ba" stroke="#e6eaec" strokeWidth="2" />
    <path d="M12 26L20 8 46 0l18 14 20-12 20 12 14 0 4 20-26 6-60 1z" fill="#e9e9e8" />
    <path d="M28 22l18-14 12 14-14 18z" fill="#8d8b88" />
    <path d="M48 18l16-2-6 12z" fill="#35c6d8" />
    <path d="M58 18l8-1-4 8z" fill="#7bd24c" />
    <path d="M78 14l12 8-4 12-12-6z" fill="#3d5a9c" />
    <path d="M88 20l14 2-8 16-10-2z" fill="#c0603a" />
    <path d="M30 22l18 18-14-4z" fill="#4c3c3a" />
    <path d="M62 34l6-8 3 14z" fill="#c4382c" />
    <path d="M108 14l12 6-6 14-6-8z" fill="#9a9a98" />
    <path d="M2 28c16 17 118 17 135 0l-17 138q-4 16-50 16t-50-16z" fill="#e0e1e2" opacity=".95" />
    <path d="M64 44q30 4 40-2-10 30-40 32-12-12 0-30z" fill="#eceded" opacity=".8" />
    <path d="M24 60l10 100M112 60l-8 100" stroke="#f2f3f3" strokeWidth="7" opacity=".7" />
    <path d="M20 152q4 30 50 29t50-29q-10 18-50 18t-50-18z" fill="#f8f8f8" opacity=".8" />
  </svg>
);

const Slot = ({ children, running, wide }: { children: React.ReactNode; running?: boolean; wide?: boolean }) => (
  <div className={`relative flex h-full shrink-0 items-center justify-center pb-[15px] ${wide ? "w-[208.5px]" : "w-[207.7px]"}`}>
    {children}
    {running && <i className="absolute bottom-[4px] mr-[3px] size-[13.5px] rounded-full bg-[#02030d]" />}
  </div>
);

const Dock = () => (
  <div className="absolute top-[2300px] left-[180px] flex h-[244px] w-[3737px] items-center rounded-[76px] border-[3px] border-white/20 bg-[linear-gradient(90deg,#5a6a80_0%,#566e82_25%,#587388_42%,#577f94_62%,#5c8092_75%,#607c85_85%,#667881_100%)] pl-[6px] shadow-[0_0_160px_rgba(0,0,0,0.27)]">
    <Slot running><Finder /></Slot>
    <Slot><Launchpad /></Slot>
    <Slot><Safari /></Slot>
    <Slot><Maps /></Slot>
    <Slot><CalendarTile /></Slot>
    <Slot><Reminders /></Slot>
    <Slot><NotesTile /></Slot>
    <Slot><AppStore /></Slot>
    <Slot><Settings /></Slot>
    <Slot><TerminalTile /></Slot>
    <Slot><PyCharm /></Slot>
    <Slot running><ChatLogo className="h-[182px] w-[174px]" /></Slot>
    <Slot><VSCode /></Slot>
    <i className="mr-[42px] ml-[48px] h-[180px] w-[3px] shrink-0 bg-[#2c4c5b]" />
    <Slot wide running><ChromeTile /></Slot>
    <Slot wide><Postman /></Slot>
    <i className="mr-[41px] ml-[47px] h-[180px] w-[3px] shrink-0 bg-[#2c4c5b]" />
    <Slot wide><TxtFile /></Slot>
    <Slot wide><Trash /></Slot>
  </div>
);

/* Night sea behind the dock, with rocks in the right corner. */
const Sea = () => (
  <svg viewBox="0 0 4096 320" preserveAspectRatio="none" className="absolute bottom-0 left-0 h-[320px] w-[4096px]">
    <defs>
      <linearGradient id="sea">
        <stop offset="0" stopColor="#03111e" />
        <stop offset=".3" stopColor="#041a2d" />
        <stop offset=".6" stopColor="#0a2b3f" />
        <stop offset="1" stopColor="#0e2a36" />
      </linearGradient>
      <linearGradient id="foam">
        <stop offset="0" stopColor="#fff" stopOpacity=".1" />
        <stop offset=".3" stopColor="#fff" stopOpacity=".28" />
        <stop offset=".6" stopColor="#fff" stopOpacity=".55" />
        <stop offset="1" stopColor="#fff" stopOpacity=".7" />
      </linearGradient>
      <mask id="fade"><rect width="4096" height="320" fill="url(#foam)" /></mask>
      <filter id="waves" x="0" y="0" width="100%" height="100%">
        <feTurbulence type="fractalNoise" baseFrequency=".035 .14" numOctaves="3" seed="4" />
        <feColorMatrix values="0 0 0 0 .36  0 0 0 0 .56  0 0 0 0 .66  3.2 0 0 0 -1.5" />
      </filter>
      <filter id="rock" x="0" y="0" width="100%" height="100%">
        <feTurbulence type="fractalNoise" baseFrequency=".04 .04" numOctaves="4" seed="9" />
        <feColorMatrix values="0 0 0 0 .24  0 0 0 0 .29  0 0 0 0 .25  3 0 0 0 -1.5" />
      </filter>
      <linearGradient id="rockFade" x1="0" y1="0" x2="0" y2="1">
        <stop offset=".5" stopColor="#04101a" />
        <stop offset="1" stopColor="#04101a" stopOpacity="0" />
      </linearGradient>
    </defs>
    <rect width="4096" height="320" fill="url(#sea)" />
    <g mask="url(#fade)">
      <rect x="-200" y="-1600" width="4500" height="3800" filter="url(#waves)" transform="rotate(-48 2048 160)" />
    </g>
    <path d="M3700 0h396v260q-120-20-180-90T3700 40z" fill="url(#rockFade)" />
    <path d="M3860 30h236v120l-120-20z" filter="url(#rock)" opacity=".6" />
  </svg>
);

export default function App() {
  return (
    <div className="relative flex h-[2560px] w-[4096px] flex-col overflow-hidden bg-[linear-gradient(180deg,#5aa0d8_0%,#4a86b5_4%,#04121f_8%)] font-['Roboto',sans-serif]">
      <Sea />
      <Gradients />
      <MenuBar />
      <div className="relative mt-[2px] flex h-[2219px] shrink-0 flex-col overflow-hidden rounded-[32px] bg-white shadow-[0_0_0_2px_#33536b]">
        <TitleBar />
        <Header />
        <div className="flex min-h-0 flex-1">
          <Sidebar />
          <Conversation />
          <SidePanel />
        </div>
      </div>
      <Dock />
    </div>
  );
}
